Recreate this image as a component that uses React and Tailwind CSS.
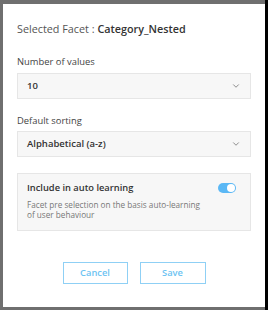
import { ChevronDown } from "lucide-react";

const font = { fontFamily: '"Open Sans", "Liberation Sans", sans-serif' };

function Select({ value }) {
    return (
        <div className="flex items-center justify-between h-[26px] bg-[#f7f7f7] border border-[#e6e6e6] pl-[9px] pr-[9px]">
            <span className="text-[9.5px] leading-[14px] font-semibold text-[#333]">{value}</span>
            <ChevronDown size={10} strokeWidth={2} className="text-[#777]" />
        </div>
    );
}

export default function App() {
    return (
        <div className="flex w-[268px] h-[310px] bg-[#6f6f6f]" style={font}>
            <div className="flex-1 pt-1 pl-[3px] pb-[3px]">
                <div className="h-full bg-white pl-[14px] pr-[14px]">
                    <div className="pt-[17px] text-[10.8px] leading-[16px] text-[#555]">
                        Selected Facet : <span className="font-semibold text-[#333]">Category_Nested</span>
                    </div>

                    <div className="mt-[18px] text-[9.4px] leading-[14px] text-[#444]">Number of values</div>
                    <div className="mt-[4px]">
                        <Select value="10" />
                    </div>

                    <div className="mt-[15px] text-[9.4px] leading-[14px] text-[#444]">Default sorting</div>
                    <div className="mt-[3px]">
                        <Select value="Alphabetical (a-z)" />
                    </div>

                    <div className="mt-[16px] bg-[#f7f7f7] border border-[#e6e6e6] pl-[9px] pr-[14px] pt-[7px] pb-[10px]">
                        <div className="flex items-center justify-between h-[14px]">
                            <span className="text-[9.3px] leading-[14px] font-semibold text-[#333]">Include in auto learning</span>
                            <div className="relative w-[18px] h-[10px] rounded-full bg-[#5bb8f5]">
                                <div className="absolute right-[1px] top-[1px] w-[8px] h-[8px] rounded-full bg-white"></div>
                            </div>
                        </div>
                        <div className="mt-[5px] text-[8.2px] leading-[10px] text-[#777]">
                            Facet pre selection on the basis auto-learning<br />of user behaviour
                        </div>
                    </div>

                    <div className="flex justify-center gap-[12px] mt-[31px]">
                        <button className="w-[65px] h-[22px] border border-[#8fd0f5] text-[9.3px] text-[#6cc3f2] font-semibold">Cancel</button>
                        <button className="w-[66px] h-[22px] border border-[#8fd0f5] text-[9.3px] text-[#6cc3f2] font-semibold">Save</button>
                    </div>
                </div>
            </div>
            <div className="w-[3px] bg-black"></div>
        </div>
    );
}
